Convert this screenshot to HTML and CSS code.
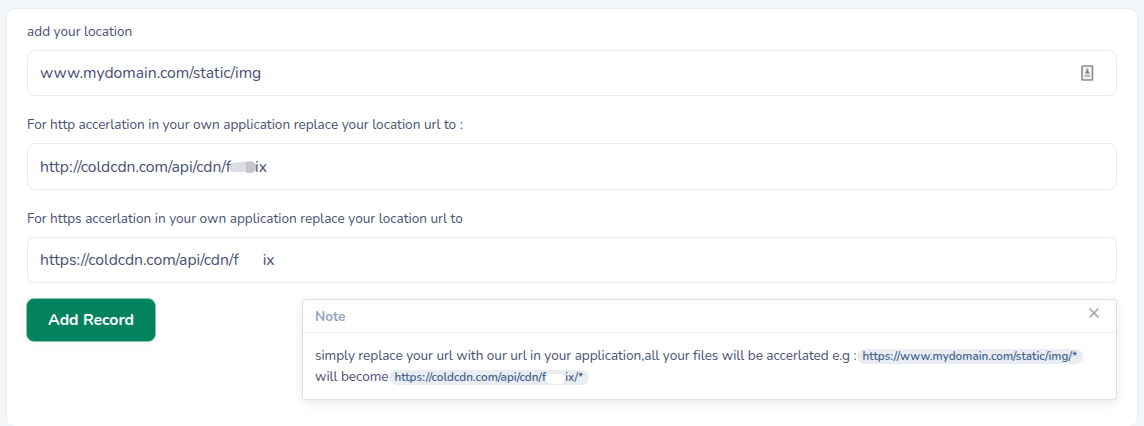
FILE: index.html
```html
<!DOCTYPE html>
<html lang="en">
<head>
<meta charset="utf-8">
<title>Add Record</title>
<link rel="stylesheet" href="styles.css">
</head>
<body>
<main class="panel">
  <div class="field field-location">
    <div class="label">add your location</div>
    <div class="input">
      <span class="value">www.mydomain.com/static/img</span>
      <svg class="autofill" width="13" height="16" viewBox="0 0 13 16">
        <rect x="1" y="1" width="10.500" height="14" rx=".8" fill="#f4f4f4" stroke="#8a8a8a" stroke-width="1.600"/>
        <path d="M5.300 3.200h2v1.300h-2z" fill="#b0b0b0"/>
        <path d="M5.300 4.500h2v2.300h1v1.700h-4V6.800h1z" fill="#808080"/>
        <path d="M3.300 9.600h6v2.400h-6z" fill="#bbb"/>
      </svg>
    </div>
  </div>
  <div class="field field-http">
    <div class="label">For http accerlation in your own application replace your location url to :</div>
    <div class="input">
      <span class="value">http://coldcdn.com/api/cdn/f</span><svg class="smudge" width="28" height="14" viewBox="0 0 28 14"><path d="M3 2Q7 1 12 1L20 .5Q27 0 27 6Q27 11 22 12Q18 12 15 11H5Q0 11 0 6Z" fill="#dedde3"/><path d="M17 .8L20 .5Q27 0 27 6Q27 11 22 12L17 11.500Z" fill="#c5c4cc"/></svg><span class="value">ix</span>
    </div>
  </div>
  <div class="field field-https">
    <div class="label">For https accerlation in your own application replace your location url to</div>
    <div class="input">
      <span class="value">https://coldcdn.com/api/cdn/f</span><span class="blank"></span><span class="value">ix</span>
    </div>
  </div>
  <div class="actions">
    <button class="add" type="button">Add Record</button>
    <section class="note">
      <header class="note-head">
        <strong class="note-title">Note</strong>
        <svg class="close" width="10" height="10" viewBox="0 0 10 10"><path d="M.7.7l8.600 8.600M9.300.7L.7 9.300" stroke="#adadad" stroke-width="1.700"/></svg>
      </header>
      <div class="note-body">
        <div class="line"><span>simply replace your url with our url in your application,all your files will be accerlated e.g :</span><code class="chip">https://www.mydomain.com/static/img/*</code></div>
        <div class="line"><span>will become</span><code class="chip"><span>https://coldcdn.com/api/cdn/f</span><span class="chip-blank"></span><span>ix/*</span></code></div>
      </div>
    </section>
  </div>
</main>
</body>
</html>
```
FILE: styles.css
```css
* { box-sizing: border-box; }

body {
  margin: 0;
  height: 426px;
  overflow: hidden;
  padding: 8px 6px 0;
  background: #f3f7fa;
  color: #4a5073;
  font-family: Nunito, Lato, sans-serif;
}

.panel {
  height: 419px;
  padding: 12px 20px 0;
  background: #fff;
  border: 1px solid #e8ecf3;
  border-radius: 9px;
}

.field-location { height: 93px; }
.field-http { height: 94px; }
.field-https { height: 90px; }

.label {
  height: 29px;
  padding-top: 1px;
  font-size: 13.6px;
  line-height: 20px;
  white-space: nowrap;
}

.input {
  display: flex;
  align-items: center;
  height: 46px;
  padding: 0 22px 1px 12px;
  border: 1px solid #e9e9f0;
  border-radius: 8px;
  font-size: 15.73px;
}

.field-http .input {
  height: 47px;
  padding-bottom: 0;
}

.value { white-space: nowrap; }
.autofill { margin-left: auto; }
.smudge { margin: 3px -2px 0 -2px; }
.blank { width: 24px; height: 14px; }

.actions {
  display: flex;
  align-items: flex-start;
  justify-content: space-between;
  margin-left: -1px;
}

.add {
  width: 130px;
  height: 44px;
  padding: 0;
  border: 1px solid #7cc9aa;
  border-radius: 8px;
  background: #02825d;
  color: #fff;
  font: 700 15.8px Nunito, Lato, sans-serif;
  box-shadow: 0 4px 12px rgba(0, 0, 0, .025);
}

.note {
  width: 815px;
  height: 101px;
  margin-top: 1px;
  border: 1px solid #e0e0e2;
  border-radius: 3px;
  box-shadow: 0 3px 11px rgba(0, 0, 0, .09);
}

.note-head {
  display: flex;
  justify-content: space-between;
  height: 33px;
  padding: 8px 17px 0 12px;
  border-bottom: 1px solid #eeeef0;
}

.note-title {
  color: #92a6bf;
  font-size: 13.6px;
  line-height: 18px;
}

.note-body {
  padding: 12px;
  font-size: 13.6px;
  letter-spacing: -.035px;
}

.line {
  display: flex;
  align-items: center;
  height: 21px;
  white-space: nowrap;
}

.chip {
  display: flex;
  align-items: center;
  height: 15px;
  margin-top: 2px;
  padding: 0 6px 1px;
  border-radius: 8px;
  background: #e9edf2;
  color: #456390;
  font: 600 11.7px Nunito, Lato, sans-serif;
  letter-spacing: .03px;
}

.chip-blank {
  width: 19px;
  height: 10px;
  margin-top: 4px;
  border-radius: 5px;
  background: #fff;
}
```
